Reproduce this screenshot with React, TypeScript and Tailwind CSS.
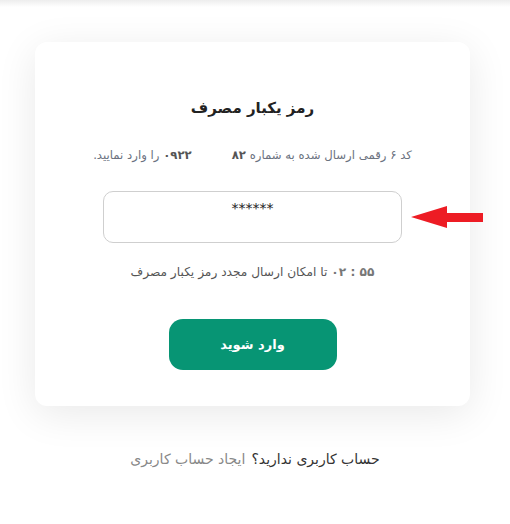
const App = () => {
  return (
    <div
      dir="rtl"
      className="min-h-[524px] w-full bg-white"
      style={{ fontFamily: '"DejaVu Sans", "Noto Sans", sans-serif' }}
    >
      <div className="h-[7px] bg-gradient-to-b from-[#ededed] to-white" />

      <div dir="ltr" className="flex">
        <div
          dir="rtl"
          className="mt-[35px] ml-[35px] flex w-[435px] flex-col items-center rounded-[12px] bg-white pt-[54px] pb-[36px] shadow-[0_8px_40px_rgba(0,0,0,0.09)]"
        >
          <h1 className="text-[15px] leading-[24px] font-bold text-[#222]">
            رمز یکبار مصرف
          </h1>

          <p className="mt-[25px] text-[11.7px] leading-[20px] text-[#6b7280]">
            کد ۶ رقمی ارسال شده به شماره{" "}
            <span dir="ltr" className="inline-block font-bold text-[#555]">
              ۰۹۲۲
              <span className="inline-block w-[40px]" />
              ۸۲
            </span>{" "}
            را وارد نمایید.
          </p>

          <div className="relative mt-[26px]">
            <input
              dir="ltr"
              value="******"
              readOnly
              className="h-[52px] w-[299px] rounded-[10px] border border-[#cfcfcf] bg-white pb-[18px] text-center text-[14px] text-[#222] outline-none"
            />
            <svg
              className="absolute top-[15px] right-[-82px]"
              width="73"
              height="22"
              viewBox="0 0 73 22"
            >
              <polygon
                points="0,11 36,0 36,7 72,7 72,16 36,16 36,22"
                fill="#ed1c24"
              />
            </svg>
          </div>

          <p className="mt-[19px] text-[12.2px] leading-[20px] text-[#555]">
            <span className="font-bold text-[#777]">۵۵ : ۰۲</span> تا امکان
            ارسال مجدد رمز یکبار مصرف
          </p>

          <button className="mt-[37px] h-[51px] w-[168px] rounded-[14px] bg-[#079574] text-[13px] font-bold text-white">
            وارد شوید
          </button>
        </div>
      </div>

      <p className="mt-[43px] text-center text-[14px] leading-[20px]">
        <span className="text-[#333]">حساب کاربری ندارید؟</span>
        <span className="mr-[6px] text-[#888]">ایجاد حساب کاربری</span>
      </p>
    </div>
  );
};

export default App;
